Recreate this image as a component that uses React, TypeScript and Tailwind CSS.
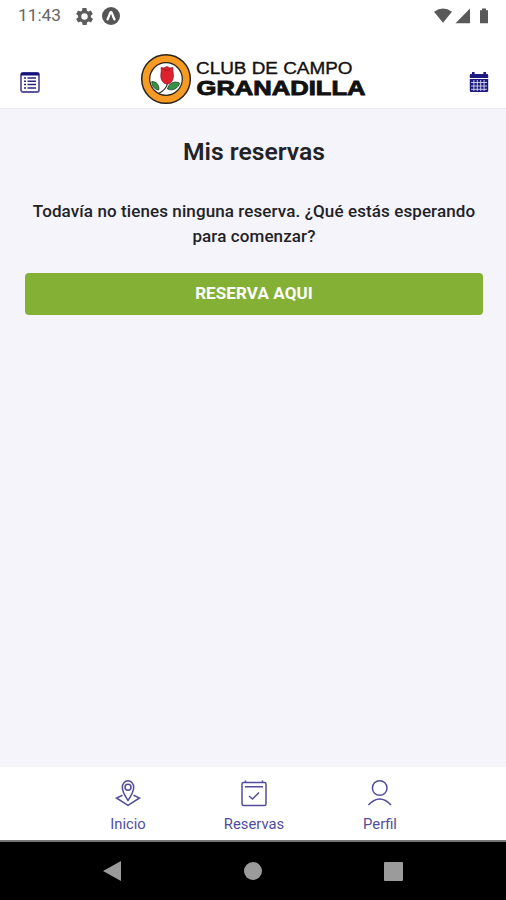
import type { ReactNode } from "react";

interface TabItem {
  label: string;
  icon: ReactNode;
}

// ---------- status bar icons ----------
const GearIcon = () => (
  <svg width="17" height="17" viewBox="2 2 20 20" fill="#5c5c5c">
    <path
      fillRule="evenodd"
      d="M19.4 13c.1-.3.1-.7.1-1s0-.7-.1-1l2.1-1.6c.2-.2.2-.4.1-.6l-2-3.5c-.1-.2-.4-.3-.6-.2l-2.5 1c-.5-.4-1.1-.7-1.7-1l-.4-2.6C14.4 2.2 14.2 2 14 2h-4c-.2 0-.4.2-.5.4l-.4 2.7c-.6.2-1.1.6-1.7 1l-2.5-1c-.2-.1-.5 0-.6.2l-2 3.5c-.1.2-.1.5.1.6L4.6 11c-.1.3-.1.7-.1 1s0 .7.1 1l-2.1 1.6c-.2.2-.2.4-.1.6l2 3.5c.1.2.4.3.6.2l2.5-1c.5.4 1.1.7 1.7 1l.4 2.6c.1.3.3.5.5.5h4c.2 0 .4-.2.5-.4l.4-2.7c.6-.2 1.1-.6 1.7-1l2.5 1c.2.1.5 0 .6-.2l2-3.5c.1-.2.1-.5-.1-.6L19.4 13zM12 15.800a3.800 3.800 0 1 1 0-7.600 3.800 3.800 0 0 1 0 7.600z"
    />
  </svg>
);

const ExpoIcon = () => (
  <svg width="18" height="18" viewBox="0 0 18 18">
    <circle cx="9" cy="9" r="9" fill="#555" />
    <path
      d="M5.5 12.4C6.8 10.4 7.6 7.7 8.2 5.800q.8-1.200 1.600 0c.6 1.900 1.400 4.600 2.700 6.600"
      fill="none"
      stroke="#fff"
      strokeWidth="2.3"
      strokeLinecap="round"
    />
    <path d="M9 7.5l1.2 4H7.8z" fill="#555" />
  </svg>
);

const SignalIcons = () => (
  <svg width="56" height="16" viewBox="0 0 56 16" fill="#595959">
    <path d="M0 3.7Q9 -2.7 18 3.7L9 14.700z" />
    <path d="M36 .5v14.800H21.500z" />
    <path d="M46 2.200h2V.5h4v1.700h2v13.100h-8z" />
  </svg>
);

// ---------- header icons ----------
const ListIcon = () => (
  <svg width="20" height="21" viewBox="0 0 20 21">
    <rect x="1" y="1" width="18" height="19" rx="2" fill="#fff" stroke="#5b57a0" strokeWidth="1.8" />
    <path d="M.8 3.400V2q0-1.500 1.500-1.500h15.400q1.500 0 1.500 1.500v1.400z" fill="#16127c" />
    <path
      d="M4 6h2M4 9.300h2M4 12.600h2M4 15.900h2M7.500 6H16M7.500 9.300H16M7.500 12.600H16M7.500 15.900H16"
      stroke="#2a2685"
      strokeWidth="1.5"
    />
  </svg>
);

const CalendarIcon = () => (
  <svg width="20" height="21" viewBox="0 0 20 21">
    <path d="M3 0h2.600v2h8.800V0H17v2h1q1.200 0 1.200 1.200V6H.8V3.200Q.8 2 2 2h1z" fill="#1d1a80" />
    <path d="M.8 7h18.400v11.800q0 1.200-1.200 1.200H2q-1.200 0-1.200-1.200z" fill="#1d1a80" />
    <path
      d="M2 10.500h16M2 14h16M2 17.300h16M4.900 8v11M8.300 8v11M11.700 8v11M15.100 8v11"
      stroke="#d9d9ec"
      strokeWidth=".9"
    />
  </svg>
);

const Logo = () => (
  <svg width="228" height="52" viewBox="0 0 228 52">
    <circle cx="26" cy="26" r="24.3" fill="#f59b23" stroke="#29231b" strokeWidth="1.5" />
    <circle cx="26" cy="26" r="16.3" fill="#fff" stroke="#29231b" strokeWidth="1.2" />
    <path d="M27.500 30c-.5 4-4 8-9 10.500" fill="none" stroke="#29231b" strokeWidth="1.2" />
    <path d="M11.800 28.500c4.500 0 7.500 3 7 8.500-4.500-.5-7-4-7-8.500z" fill="#339447" stroke="#234023" strokeWidth=".8" />
    <path d="M27.500 36c1-5.500 6.500-8.500 12-6-1 5-6.500 8.500-12 6z" fill="#339447" stroke="#234023" strokeWidth=".8" />
    <path
      d="M21 14.500l3 .5 2.800-1.500L30 15l3-.5c-.6 3 .6 5.500.4 8.500-.2 4.500-2.600 8-6.100 8s-6.500-3.500-6.500-8c0-3 .9-5.500.2-8.500z"
      fill="#df202d"
      stroke="#7b1a20"
      strokeWidth=".7"
    />
    <path d="M23.500 16c1.500 1.800 4.500 1.800 6.500 0" fill="none" stroke="#8f1720" strokeWidth=".8" />
    <g fontFamily="'Liberation Sans', Arial, sans-serif" fill="#111">
      <text x="56" y="21" fontSize="17" stroke="#111" strokeWidth=".35" textLength="156.5" lengthAdjust="spacingAndGlyphs">
        CLUB DE CAMPO
      </text>
      <text
        x="56.5"
        y="41.6"
        fontSize="20.8"
        fontWeight="700"
        stroke="#111"
        strokeWidth=".9"
        textLength="169"
        lengthAdjust="spacingAndGlyphs"
      >
        GRANADILLA
      </text>
    </g>
  </svg>
);

// ---------- tab icons ----------
const tabs: TabItem[] = [
  {
    label: "Inicio",
    icon: (
      <>
        <path d="M14 21.5C11 17 8.300 13 8.300 8.300a5.700 6.500 0 0 1 11.400 0c0 4.700-2.700 8.700-5.700 13.200z" />
        <circle cx="14" cy="8.300" r="3" />
        <path d="M8.500 16.200L2.500 19 14 26.300 25.500 19l-6-2.800" />
      </>
    ),
  },
  {
    label: "Reservas",
    icon: (
      <>
        <rect x="2" y="3.500" width="24" height="23" rx="1.5" />
        <path d="M5.500 1.500v2M22.500 1.500v2M5 7.800h18M9 17l3.500 3 6.500-6.500" />
      </>
    ),
  },
  {
    label: "Perfil",
    icon: (
      <>
        <circle cx="13.700" cy="9" r="7.300" />
        <path d="M2.400 26q11.300-12 22.600 0" />
      </>
    ),
  },
];

export default function App() {
  return (
    <div className="flex h-[900px] w-[506px] flex-col overflow-hidden bg-[#f4f4fa] font-['Roboto',sans-serif]">
      {/* status bar */}
      <div className="flex h-8 shrink-0 items-center bg-white pr-4 pl-[18px]">
        <span className="w-[58px] text-[17.3px] text-[#666]">11:43</span>
        <GearIcon />
        <span className="ml-[9px]">
          <ExpoIcon />
        </span>
        <span className="ml-auto">
          <SignalIcons />
        </span>
      </div>

      {/* header */}
      <header className="flex h-[77px] shrink-0 items-end justify-between border-b border-[#ececf0] bg-white pr-[17px] pl-5">
        <span className="pb-[15px]">
          <ListIcon />
        </span>
        <span className="mr-0.5 pb-[3px]">
          <Logo />
        </span>
        <span className="pb-[15px]">
          <CalendarIcon />
        </span>
      </header>

      <main className="flex-1 pt-[27px] pr-[23px] pl-[25px] text-center text-[#222227]">
        <h1 className="text-[24.7px] leading-8 font-semibold">Mis reservas</h1>
        <p className="mt-[31px] text-[17px] leading-[25px] font-medium tracking-[0.1px]">
          Todavía no tienes ninguna reserva. ¿Qué estás esperando
          <br />
          para comenzar?
        </p>
        <button className="mt-6 h-[42px] w-full rounded bg-[#85b036] text-[17px] font-bold tracking-[0.1px] text-white">
          RESERVA AQUI
        </button>
      </main>

      {/* tab bar */}
      <nav className="flex h-[75px] shrink-0 justify-center border-b-2 border-[#777] bg-white pt-3 pl-0.5 text-[#514d9b]">
        {tabs.map((tab) => (
          <a key={tab.label} className="flex w-[126px] flex-col items-center">
            <svg width="28" height="28" viewBox="0 0 28 28" fill="none" stroke="currentColor" strokeWidth="1.5">
              {tab.icon}
            </svg>
            <span className="mt-2 text-[14.8px] leading-[18px]">{tab.label}</span>
          </a>
        ))}
      </nav>

      {/* system navigation */}
      <div className="flex h-[58px] shrink-0 items-center justify-center bg-black">
        <svg width="300" height="20" viewBox="0 0 300 20" fill="#9b9b9b">
          <path d="M0 10L18 0v20z" />
          <circle cx="150" cy="10" r="9" />
          <rect x="281" y="1" width="19" height="19" rx="1" />
        </svg>
      </div>
    </div>
  );
}
